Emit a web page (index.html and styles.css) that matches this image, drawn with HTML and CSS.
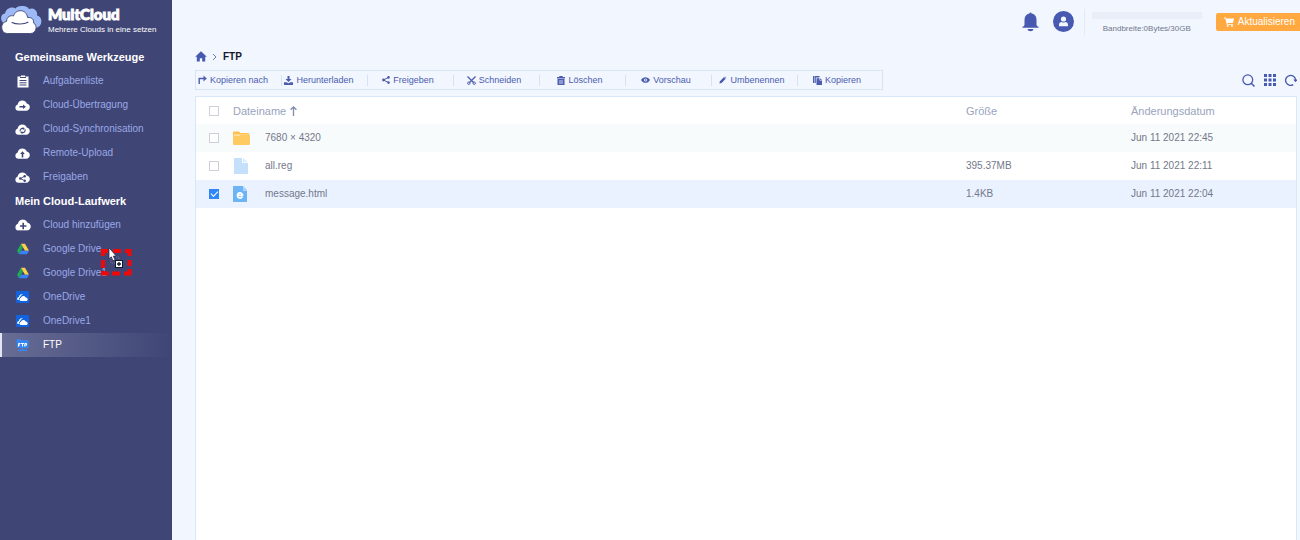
FILE: index.html
```html
<!DOCTYPE html>
<html lang="de">
<head>
<meta charset="utf-8">
<title>MultCloud</title>
<link rel="stylesheet" href="styles.css">
</head>
<body>
<svg class="defs" aria-hidden="true">
  <symbol id="cloud" viewBox="0 0 15 11"><path fill="#fff" d="M3.6 10.7A3.2 3.2 0 0 1 .4 7.5c0-1.5 1-2.7 2.3-3.1C3.1 2 5 .4 7.4.4c2 0 3.7 1.200 4.400 3 1.800.3 3 1.800 3 3.600 0 2-1.600 3.700-3.600 3.700z"/></symbol>
  <symbol id="drive" viewBox="0 0 12 12"><path fill="#1faa55" d="M4 .7 0 7.700l2 3.500 4-7z"/><path fill="#ffcf48" d="M4 .7h4l4 7H8z"/><path fill="#3b82f6" d="M4 7.700h8l-2 3.500H2z"/></symbol>
  <symbol id="onedrive" viewBox="0 0 13 12"><rect width="13" height="12" rx="1" fill="#1263de"/><path fill="#fff" d="M1.500 8.900C.8 7.300 1.800 6 3 6c0-2 2-3.400 3.900-2.600C5 4 4.400 5 4.200 6.200 2.900 6.500 2.500 8 3.200 9zM4.700 10C3 9.500 3.300 7 5 7c.2-2.300 3.800-3 4.800-.4 2 .1 2.600 2.700.9 3.400z"/></symbol>
  <symbol id="cursor" viewBox="0 0 18 22"><path fill="#fff" stroke="#20243f" stroke-width=".7" d="M1 .8v11l2.300-2 1.700 4 2-.9-1.700-3.800h3z"/><path fill="none" stroke="#777b93" stroke-dasharray="1 1" d="M3 11v5h4M8 10h3v4"/><rect x="7.500" y="13.500" width="7" height="7" fill="#fff" stroke="#15182b"/><path stroke="#15182b" stroke-width="1.300" d="M11 15v4M9 17h4"/></symbol>
</svg>
<div class="app">
  <aside class="sidebar">
    <div class="brand">
      <svg class="brand-logo" viewBox="0 0 42 28"><path fill="#9db9f6" d="M4 17C0 16 0 7.500 5 7.500 6 2 12 0 15.500 2.500 18-1 27-1 29 3c5-2 9 2 8 6.500 6 1 6 11-1 12.500l-8-1H8z"/><path fill="#fff" stroke="#3f4676" stroke-width=".9" d="M7.500 27.500C0 27.500 0 16 6.500 15.500 6.800 10.500 10.500 9 13.500 10c2.500-8 13.500-6.500 14 1.500 4.500-.5 6.800 2.500 6 5.500 4.500 2 3 10.500-3 10.500z"/><path fill="none" stroke="#3f4676" stroke-width="1.100" stroke-linecap="round" d="M12 16.500c4 2 12 2 16-.3"/></svg>
      <div class="brand-text">
        <span class="brand-name">MultCloud</span>
        <span class="brand-slogan">Mehrere Clouds in eine setzen</span>
      </div>
    </div>
    <nav class="nav">
      <h2 class="nav-title">Gemeinsame Werkzeuge</h2>
      <a class="nav-item" href="#"><span class="nav-icon"><svg width="12" height="13" viewBox="0 0 12 13"><path fill="#fff" d="M.5 1.500H4V.4h4v1.100h3.500v11H.5z"/><path stroke="#3f4676" d="M3 2.500h6M2.500 5.500h7M2.500 7.800h7M2.500 10h7"/></svg></span>Aufgabenliste</a>
      <a class="nav-item" href="#"><span class="nav-icon"><svg width="15" height="11" viewBox="0 0 15 11"><use href="#cloud"/><path fill="#3f4676" d="M4.500 6H8V4.500l3 2.200-3 2.200V7.400H4.500z"/></svg></span>Cloud-Übertragung</a>
      <a class="nav-item" href="#"><span class="nav-icon"><svg width="15" height="11" viewBox="0 0 15 11"><use href="#cloud"/><path fill="none" stroke="#3f4676" stroke-width="1.100" d="M5.300 7.500c-.7-2 1-3.600 3-3M9.900 5.300c.9 2-1 3.900-3 3.200"/><path fill="#3f4676" d="m7.800 3 2 1.700-2 1.300zM7.300 7l-2 1.400 2 1.500z"/></svg></span>Cloud-Synchronisation</a>
      <a class="nav-item" href="#"><span class="nav-icon"><svg width="15" height="11" viewBox="0 0 15 11"><use href="#cloud"/><path fill="#3f4676" d="m7.500 3.200 2.300 2.900H8.300V9.600H6.700V6.100H5.200z"/></svg></span>Remote-Upload</a>
      <a class="nav-item" href="#"><span class="nav-icon"><svg width="15" height="11" viewBox="0 0 15 11"><use href="#cloud"/><path fill="none" stroke="#3f4676" stroke-width=".9" d="m9.500 4.300-4 2.200 4 2.200"/><g fill="#3f4676"><circle cx="9.700" cy="4.300" r="1.200"/><circle cx="5.300" cy="6.500" r="1.300"/><circle cx="9.700" cy="8.700" r="1.200"/></g></svg></span>Freigaben</a>
      <h2 class="nav-title">Mein Cloud-Laufwerk</h2>
      <a class="nav-item" href="#"><span class="nav-icon"><svg width="16" height="12" viewBox="0 0 15 11"><use href="#cloud"/><path stroke="#3f4676" stroke-width="1.500" d="M7.700 3.500v6M4.700 6.500h6"/></svg></span>Cloud hinzufügen</a>
      <a class="nav-item" href="#"><span class="nav-icon"><svg width="12" height="12"><use href="#drive"/></svg></span>Google Drive</a>
      <a class="nav-item" href="#"><span class="nav-icon"><svg width="12" height="12"><use href="#drive"/></svg></span>Google Drive1</a>
      <a class="nav-item" href="#"><span class="nav-icon"><svg width="13" height="12"><use href="#onedrive"/></svg></span>OneDrive</a>
      <a class="nav-item" href="#"><span class="nav-icon"><svg width="13" height="12"><use href="#onedrive"/></svg></span>OneDrive1</a>
      <a class="nav-item nav-item-active" href="#" aria-current="page"><span class="nav-icon"><svg width="13" height="13" viewBox="0 0 13 13"><path fill="#3587f5" d="M.5.200h4l1 1h7v7.800H7v1.500h4v1.500H2v-1.500h4V9H1z"/><path stroke="#fff" stroke-width="1" fill="none" d="M2.500 7.500V4.500h2M2.500 6H4M5 4.500h3M6.500 4.500v3M8.800 7.500v-3h1.700v1.700H9"/></svg></span>FTP</a>
    </nav>
    <div class="drag-frame" aria-hidden="true">
      <svg width="32" height="28" viewBox="0 0 32 28"><path fill="none" stroke="#f00808" stroke-width="4" d="M3 8V3h5M13 3h8M25 3h4.500v5M29.500 12v6M29.500 21v4.500H24M20 25.500h-8M9 25.500H3V23M3 20v-8"/></svg>
      <svg class="drag-cursor" width="18" height="22"><use href="#cursor"/></svg>
    </div>
  </aside>
  <main class="main">
    <header class="topbar">
      <button class="icon-button bell" aria-label="Benachrichtigungen"><svg width="17" height="20" viewBox="0 0 17 20"><path fill="#4759b0" d="M7.500 1.500c0-1.500 2-1.500 2 0 3.500.6 5 3 5 6.500v5l1 1.500h1v1.300H.5v-1.300h1l1-1.500V8c0-3.500 1.500-5.900 5-6.500zM5.500 17h6c-.5 3-5.500 3-6 0z"/></svg></button>
      <button class="icon-button avatar" aria-label="Konto"><svg width="21" height="21" viewBox="0 0 21 21"><circle cx="10.500" cy="10.500" r="10.500" fill="#4759b0"/><circle cx="10.500" cy="8" r="2.600" fill="#f2f6ff"/><path fill="#f2f6ff" d="M6 15.300v-1.500c0-2 1.300-2.800 2.700-2.800 1 .8 2.600.8 3.600 0 1.400 0 2.700.8 2.700 2.800v1.500z"/></svg></button>
      <div class="bandwidth">
        <progress class="bandwidth-bar" id="bw" value="0" max="30"></progress>
        <label class="bandwidth-label" for="bw">Bandbreite:0Bytes/30GB</label>
      </div>
      <button class="upgrade"><svg width="10" height="10" viewBox="0 0 10 10"><path fill="#fff" d="M0 .5h2l.4 1H10L9 6H3.400l.2.900H9v.9H2.800L1.400 1.400H0z"/><circle cx="3.700" cy="9" r=".9" fill="#fff"/><circle cx="8" cy="9" r=".9" fill="#fff"/></svg>Aktualisieren</button>
    </header>
    <nav class="breadcrumb" aria-label="Pfad">
      <a class="home" href="#" aria-label="Start"><svg width="12" height="11" viewBox="0 0 12 11"><path fill="#4759b0" d="M6 .2 11.800 5.800H10.200V10.500H7.200V7.200H4.800v3.300h-3V5.800H.2z"/></svg></a>
      <svg width="5" height="8" viewBox="0 0 5 8"><path fill="none" stroke="#777f95" d="m1 1 3 3-3 3"/></svg>
      <span class="crumb">FTP</span>
    </nav>
    <div class="actions">
      <div class="toolbar" role="toolbar">
        <button class="tool tool-wide"><svg width="9" height="10" viewBox="0 0 9 10"><path fill="none" stroke="currentColor" stroke-width="1.400" d="M1.200 9V3.500h5"/><path fill="currentColor" d="m5.500.6 3.300 2.900-3.300 2.900z"/></svg>Kopieren nach</button>
        <button class="tool tool-wide"><svg width="9" height="9" viewBox="0 0 9 9"><path fill="currentColor" d="M3.500 0h2v3h2l-3 3-3-3h2zM0 6.300h2.500l2 1 2-1H9V9H0z"/></svg>Herunterladen</button>
        <button class="tool"><svg width="8" height="8" viewBox="0 0 8 8"><path fill="none" stroke="currentColor" d="M6.500 1.400 1.500 4l5 2.600"/><g fill="currentColor"><circle cx="6.500" cy="1.400" r="1.300"/><circle cx="1.500" cy="4" r="1.400"/><circle cx="6.500" cy="6.600" r="1.300"/></g></svg>Freigeben</button>
        <button class="tool"><svg width="9" height="9" viewBox="0 0 9 9"><path stroke="currentColor" stroke-width="1.300" d="m.5.500 6 6M8.500.500l-6 6"/><g fill="none" stroke="currentColor"><circle cx="1.800" cy="7.200" r="1.200"/><circle cx="7.200" cy="7.200" r="1.200"/></g></svg>Schneiden</button>
        <button class="tool"><svg width="8" height="9" viewBox="0 0 8 9"><path fill="currentColor" d="M0 1h2.300V0h3.400v1H8v1.400H0zM.500 3h7v6h-7z"/><path stroke="#f2f6ff" stroke-width=".8" d="M2 5h4M2 7h4"/></svg>Löschen</button>
        <button class="tool"><svg width="9" height="6" viewBox="0 0 9 6"><path fill="currentColor" d="M0 3c2.200-3.800 6.800-3.800 9 0-2.200 3.800-6.800 3.800-9 0z"/><circle cx="4.500" cy="3" r="1.600" fill="#f2f6ff"/><circle cx="4.500" cy="3" r=".8" fill="currentColor"/></svg>Vorschau</button>
        <button class="tool"><svg width="8" height="8" viewBox="0 0 8 8"><path fill="currentColor" d="m.4 7.500.5-2.300L5 1.100l1.700 1.700-4.100 4.100zM5.500.600c.6-.6 2.200.9 1.700 1.600z"/></svg>Umbenennen</button>
        <button class="tool"><svg width="9" height="9" viewBox="0 0 9 9"><path fill="currentColor" d="M0 0h1v7H0zM1.500 0h5v1.500H2.800V7H1.500z"/><path fill="currentColor" d="M3.500 2.300h3v2.200H9V9H3.500zM7.200 2.200 9 3.900H7.200z"/></svg>Kopieren</button>
      </div>
      <div class="view-tools">
        <button class="icon-button" aria-label="Suchen"><svg width="13" height="13" viewBox="0 0 13 13"><circle cx="5.800" cy="5.800" r="4.900" fill="none" stroke="#4759b0" stroke-width="1.300"/><path stroke="#4759b0" stroke-width="1.500" d="m9.200 9.200 3.300 3.300"/></svg></button>
        <button class="icon-button" aria-label="Kachelansicht"><svg width="12" height="12" viewBox="0 0 12 12"><path stroke="#4759b0" stroke-width="3" stroke-dasharray="3 1.500" d="M0 1.500h12M0 6h12M0 10.500h12"/></svg></button>
        <button class="icon-button" aria-label="Aktualisieren"><svg width="12" height="12" viewBox="0 0 12 12"><path fill="none" stroke="#4759b0" stroke-width="1.300" d="M8.300 10.600A5 5 0 1 1 10.600 6"/><path fill="#4759b0" d="M8.300 5.500H12.500L10.500 8.300z"/></svg></button>
      </div>
    </div>
    <section class="panel">
      <table class="files">
        <colgroup><col class="col-check"><col class="col-icon"><col><col class="col-size"><col class="col-date"></colgroup>
        <thead>
          <tr><th class="check"><input type="checkbox" aria-label="Alle auswählen"></th><th colspan="2"><span class="sort">Dateiname<svg width="7" height="10" viewBox="0 0 7 10"><path fill="none" stroke="#7f8aae" stroke-width="1.300" d="M3.500 10V1M.600 3.800l2.900-2.900 2.900 2.900"/></svg></span></th><th>Größe</th><th>Änderungsdatum</th></tr>
        </thead>
        <tbody>
          <tr class="row-tint"><td class="check"><input type="checkbox" aria-label="7680 × 4320"></td><td><svg class="file-icon" width="17" height="15" viewBox="0 0 17 15"><path fill="#ffbf52" d="M0 1.500Q0 .5 1 .5h5l1.500 1.500H15q1 0 1 1v3H0z"/><path fill="#fff1d6" d="M1 3.500h14.500v2H1z"/><path fill="#ffca62" d="M0 4.500h6.500L8 3.500h9V13q0 1-1 1H1q-1 0-1-1z"/></svg></td><td>7680 × 4320</td><td></td><td>Jun 11 2021 22:45</td></tr>
          <tr><td class="check"><input type="checkbox" aria-label="all.reg"></td><td><svg class="file-icon" width="15" height="16" viewBox="0 0 15 16"><path fill="#c5e0fb" d="M1 0h8v5h6v11H1z"/><path fill="#d9ebfd" d="m10 0 5 4.300h-5z"/></svg></td><td>all.reg</td><td>395.37MB</td><td>Jun 11 2021 22:11</td></tr>
          <tr class="row-selected"><td class="check"><input type="checkbox" checked aria-label="message.html"></td><td><svg class="file-icon" width="15" height="16" viewBox="0 0 15 16"><path fill="#6cb4f5" d="M0 0h10v4.500h4V16H0z"/><path fill="#a5d2fa" d="m10 0 4 4h-4z"/><path fill="none" stroke="#fff" stroke-width="1.700" d="M4.500 9.400h5c0-3.300-4.800-3.200-5 0-.2 3 3.500 3.500 4.800 1.400"/></svg></td><td>message.html</td><td>1.4KB</td><td>Jun 11 2021 22:04</td></tr>
        </tbody>
      </table>
    </section>
  </main>
</div>
</body>
</html>
```
FILE: styles.css
```css
* { box-sizing: border-box; }

body {
  margin: 0;
  font: 10px/12px "Liberation Sans", Arial, sans-serif;
  color: #73788a;
  background: #f1f6ff;
}

svg { display: block; flex: none; }
button { font: inherit; border: 0; padding: 0; background: none; cursor: pointer; }
a { color: inherit; text-decoration: none; }
.defs { position: absolute; width: 0; height: 0; }

.app { display: flex; min-height: 100vh; }

.sidebar {
  position: relative;
  flex: none;
  width: 172px;
  background: #3f4676;
}

.brand {
  display: flex;
  gap: 6px;
  height: 45px;
  padding-top: 6px;
}
.brand-logo { width: 42px; height: 28px; }
.brand-text { display: flex; flex-direction: column; color: #fff; white-space: nowrap; }
.brand-name { font: 900 15px/17px Lato, "Liberation Sans", sans-serif; -webkit-text-stroke: 1px #fff; }
.brand-slogan { font-size: 8px; line-height: 14px; }

.nav-title {
  margin: 0;
  padding-left: 15px;
  font-size: 11px;
  line-height: 24px;
  color: #fff;
}
.nav-item {
  display: flex;
  align-items: center;
  gap: 13px;
  height: 24px;
  padding-left: 15px;
  color: #9ba8e6;
}
.nav-icon { display: flex; justify-content: center; width: 15px; }
.nav-item-active {
  color: #fff;
  background: linear-gradient(90deg, #686d95, #3f4676);
  box-shadow: inset 2px 0 #e3e5f0;
}

.drag-frame { position: absolute; left: 100px; top: 248px; }
.drag-cursor { position: absolute; left: 8px; top: -1px; }

.main {
  flex: 1;
  min-width: 0;
  display: flex;
  flex-direction: column;
  padding-left: 23px;
}

.topbar {
  display: flex;
  justify-content: flex-end;
  align-items: center;
  height: 43px;
}
.bell { margin-right: 14px; }
.avatar { margin-right: 10px; }
.bandwidth {
  display: flex;
  flex-direction: column;
  align-items: center;
  gap: 4px;
  margin-right: 14px;
  padding: 3px 0 0 7px;
  border-left: 1px solid #e4e9f4;
}
.bandwidth-bar {
  appearance: none;
  width: 110px;
  height: 7px;
  border: 0;
  background: #e9eef8;
}
.bandwidth-bar::-webkit-progress-bar { background: #e9eef8; }
.bandwidth-label { font-size: 8px; }
.upgrade {
  display: flex;
  align-items: center;
  gap: 4px;
  height: 18px;
  padding: 0 5px 0 8px;
  border-radius: 2px 0 0 2px;
  background: #ffa940;
  color: #fff;
}

.breadcrumb { display: flex; align-items: center; gap: 5px; height: 27px; }
.crumb { margin-left: 1px; font-weight: bold; color: #15182b; }

.actions {
  display: flex;
  align-items: center;
  justify-content: space-between;
  padding-right: 3px;
}
.toolbar {
  display: flex;
  border: 1px solid #dae3f2;
}
.tool {
  display: flex;
  align-items: center;
  justify-content: center;
  gap: 3px;
  width: 86px;
  height: 18px;
  padding-right: 6px;
  font-size: 9px;
  color: #4c5cae;
  background: linear-gradient(#d9e0f0, #d9e0f0) right center / 1px 11px no-repeat;
}
.tool:last-child { width: 84px; background: none; }
.tool-wide { padding-right: 12px; }
.view-tools { display: flex; align-items: center; gap: 9px; }

.panel {
  flex: 1;
  margin: 6px 3px 0 0;
  border: 1px solid #d9e7fb;
  border-bottom: 0;
  background: #fff;
}
.files { width: 100%; table-layout: fixed; border-collapse: collapse; }
.files th, .files td { height: 28px; padding: 0; text-align: left; }
.files th { height: 27px; font-size: 11px; font-weight: normal; color: #99a3bd; }
.col-check { width: 37px; }
.col-icon { width: 32px; }
.col-size { width: 165px; }
.col-date { width: 165px; }
.row-tint { background: #f8fbfc; }
.row-selected { background: #eaf2ff; }
.sort { display: flex; align-items: center; gap: 4px; }

.files .check { padding-left: 13px; }
.check input {
  appearance: none;
  display: block;
  width: 10px;
  height: 10px;
  margin: 0;
  border: 1px solid #cdd0da;
  background: #fff;
}
.check input:checked {
  border-color: #2f86f6;
  background: #2f86f6;
}
.check input:checked::before {
  content: "";
  display: block;
  width: 6px;
  height: 3px;
  margin: 1px;
  border: solid #fff;
  border-width: 0 0 1px 1px;
  transform: rotate(-45deg);
}
```
